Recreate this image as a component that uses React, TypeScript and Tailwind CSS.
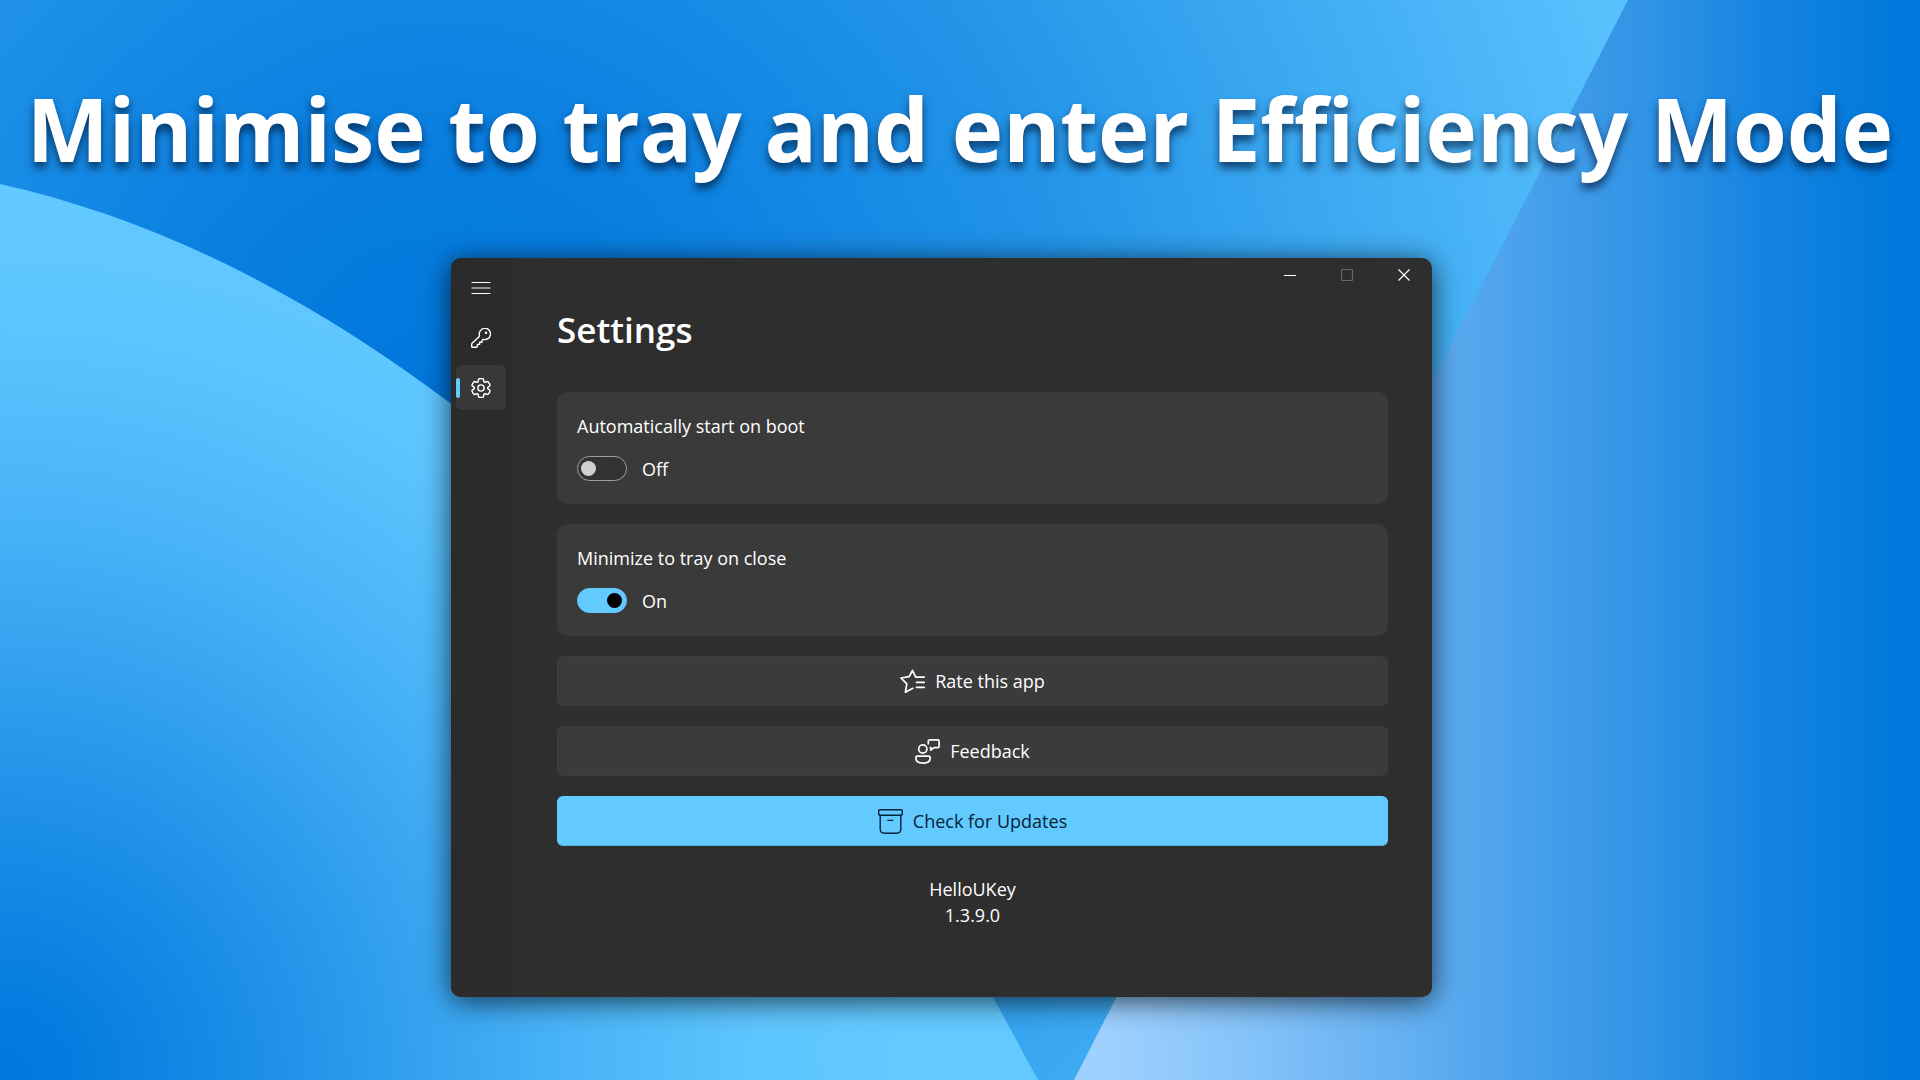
import { useState } from "react";
import type { ReactNode } from "react";

function Wallpaper() {
  return (
    <svg
      aria-hidden="true"
      className="absolute inset-0 h-full w-full"
      viewBox="0 0 1920 1080"
      preserveAspectRatio="none"
    >
      <defs>
        <radialGradient id="sky" gradientUnits="userSpaceOnUse" cx="440" cy="400" r="1240">
          <stop offset="0" stopColor="#0076dc" />
          <stop offset="0.2" stopColor="#097ee0" />
          <stop offset="0.5" stopColor="#2193e8" />
          <stop offset="0.8" stopColor="#43aff4" />
          <stop offset="1" stopColor="#59c2fe" />
        </radialGradient>
        <radialGradient id="wave" gradientUnits="userSpaceOnUse" cx="0" cy="1080" r="900">
          <stop offset="0" stopColor="#0077dc" />
          <stop offset="0.08" stopColor="#047bdf" />
          <stop offset="0.3" stopColor="#1e90e8" />
          <stop offset="0.5" stopColor="#38a5f1" />
          <stop offset="0.63" stopColor="#48b3f7" />
          <stop offset="0.84" stopColor="#5dc5fe" />
          <stop offset="1" stopColor="#62caff" />
        </radialGradient>
        <linearGradient id="beam" gradientUnits="userSpaceOnUse" x1="1100" y1="0" x2="1900" y2="0">
          <stop offset="0" stopColor="#9fd1ff" />
          <stop offset="0.19" stopColor="#84c2f9" />
          <stop offset="0.43" stopColor="#5cabf0" />
          <stop offset="0.55" stopColor="#459fea" />
          <stop offset="0.69" stopColor="#2f93e6" />
          <stop offset="0.83" stopColor="#1584e1" />
          <stop offset="1" stopColor="#0078dc" />
        </linearGradient>
      </defs>
      <rect width="1920" height="1080" fill="url(#sky)" />
      <path d="M0 184C170 222 320 305 450 403C690 585 880 780 993 997L1038 1080H0Z" fill="url(#wave)" />
      <path d="M1628 0H1920V1080H1074Z" fill="url(#beam)" />
    </svg>
  );
}

function MenuIcon() {
  return (
    <svg aria-hidden="true" className="size-5" viewBox="0 0 20 20" fill="none" stroke="currentColor" strokeWidth="1.2" strokeLinecap="round">
      <path d="M1 4.5H19M1 10H19M1 15.5H19" />
    </svg>
  );
}

function KeyIcon() {
  return (
    <svg aria-hidden="true" className="size-5" viewBox="0 0 20 20" fill="none" stroke="currentColor" strokeWidth="1.4" strokeLinejoin="round">
      <path d="M8.5 7.5A5.6 5.6 0 1 1 12.2 11.3L11 12.6V14.2H8.6V16.4H6.4V18.2L5.4 19.3H1.6Q.7 19.3 .7 18.4V16.2Q.7 15.6 1.1 15.2L8.3 8.4Z" />
      <circle cx="15" cy="4.8" r="1.3" fill="currentColor" stroke="none" />
    </svg>
  );
}

function GearIcon() {
  return (
    <svg aria-hidden="true" className="size-5" viewBox="1 1 18 18" fill="none" stroke="currentColor" strokeWidth="1.3" strokeLinejoin="round">
      <path d="M1.91 7.38A8.5 8.5 0 0 1 3.7 4.3a.5.5 0 0 1 .54-.13l1.92.68a1 1 0 0 0 1.32-.76l.36-2a.5.5 0 0 1 .4-.4 8.53 8.53 0 0 1 3.55 0c.2.04.35.2.38.4l.37 2a1 1 0 0 0 1.32.76l1.92-.68a.5.5 0 0 1 .54.13 8.5 8.5 0 0 1 1.78 3.08c.06.2 0 .4-.15.54l-1.56 1.32a1 1 0 0 0 0 1.52l1.56 1.32a.5.5 0 0 1 .15.54 8.5 8.5 0 0 1-1.78 3.08.5.5 0 0 1-.54.13l-1.92-.68a1 1 0 0 0-1.32.76l-.37 2a.5.5 0 0 1-.38.4 8.53 8.53 0 0 1-3.56 0 .5.5 0 0 1-.39-.4l-.36-2a1 1 0 0 0-1.32-.76l-1.92.68a.5.5 0 0 1-.54-.13 8.5 8.5 0 0 1-1.78-3.08.5.5 0 0 1 .15-.54l1.56-1.32a1 1 0 0 0 0-1.52L2.06 7.92a.5.5 0 0 1-.15-.54Z" />
      <circle cx="10" cy="10" r="2.8" />
    </svg>
  );
}

function StarListIcon() {
  return (
    <svg aria-hidden="true" className="size-[25px]" viewBox="0 0 25 25" fill="none" stroke="currentColor" strokeWidth="1.7" strokeLinejoin="round" strokeLinecap="round">
      <path d="M24.2 8.1H15.7L12.5 1.3L9.2 7.7L1 9L6.8 14.8L5.4 23.2L12.8 19.3" />
      <path d="M16.5 13.3H24.2M16.5 18.3H24.2" />
    </svg>
  );
}

function FeedbackIcon() {
  return (
    <svg aria-hidden="true" className="size-[25px]" viewBox="0 0 25 25" fill="none" stroke="currentColor" strokeWidth="1.7" strokeLinejoin="round">
      <circle cx="7.8" cy="10" r="4.1" />
      <path d="M2.5 17.2H13.5Q15.2 17.2 15.2 18.9C15.2 22.6 12 24.1 8 24.1S.9 22.6 .9 18.9Q.9 17.2 2.5 17.2Z" />
      <path d="M13.3 5.6V2.3Q13.3 .9 14.8 .9H22.6Q24.1 .9 24.1 2.3V7.2Q24.1 8.7 22.6 8.7H19L15.8 11.2V8.7H14.6" />
    </svg>
  );
}

function ArchiveIcon() {
  return (
    <svg aria-hidden="true" className="size-[25px]" viewBox="0 0 25 25" fill="none" stroke="currentColor" strokeWidth="1.4" strokeLinejoin="round" strokeLinecap="round">
      <rect x=".7" y=".7" width="23.6" height="5.6" rx="1.2" />
      <path d="M2.2 6.3V20Q2.2 24.2 6.5 24.2H18.5Q22.8 24.2 22.8 20V6.3M9.8 11.4H14.8" />
    </svg>
  );
}

function NavButton({ label, active = false, children }: { label: string; active?: boolean; children: ReactNode }) {
  return (
    <button
      type="button"
      aria-label={label}
      aria-current={active ? "page" : undefined}
      className={
        active
          ? "relative flex h-[45px] w-[50px] items-center justify-center rounded-md bg-[#383838]"
          : "flex h-[45px] w-[50px] items-center justify-center rounded-md hover:bg-[#383838]"
      }
    >
      {active && <span className="absolute left-0 h-5 w-1 rounded-full bg-[#62caff]" />}
      {children}
    </button>
  );
}

function CaptionButton({ label, disabled = false, path }: { label: string; disabled?: boolean; path: string }) {
  return (
    <button
      type="button"
      aria-label={label}
      disabled={disabled}
      className="flex h-[34px] w-[57px] items-center justify-center text-white disabled:text-[#686868]"
    >
      <svg aria-hidden="true" className="size-3" viewBox="0 0 12 12" fill="none" stroke="currentColor" strokeWidth="1.2">
        <path d={path} />
      </svg>
    </button>
  );
}

function SettingToggle({ id, label, initial }: { id: string; label: string; initial: boolean }) {
  const [on, setOn] = useState(initial);
  return (
    <div className="rounded-[10px] bg-[#3a3a3a] px-5 pt-[22px] pb-[23px]">
      <label htmlFor={id} className="block leading-6">
        {label}
      </label>
      <div className="mt-[18px] flex h-[25px] items-center gap-[15px]">
        <input
          id={id}
          type="checkbox"
          role="switch"
          checked={on}
          onChange={(event) => setOn(event.target.checked)}
          className="flex h-[25px] w-[50px] appearance-none items-center rounded-full border border-[#a0a0a0] bg-[#333333] px-[3px] before:block before:size-[15px] before:rounded-full before:bg-[#d0d0d0] checked:justify-end checked:border-[#62caff] checked:bg-[#62caff] checked:px-1 checked:before:bg-black"
        />
        <span className="leading-6">{on ? "On" : "Off"}</span>
      </div>
    </div>
  );
}

function ActionButton({ icon, accent = false, children }: { icon: ReactNode; accent?: boolean; children: ReactNode }) {
  return (
    <button
      type="button"
      className={
        accent
          ? "flex h-[50px] items-center justify-center gap-2.5 rounded-md border border-[#62caff] border-b-[#55afdd] bg-[#62caff] text-[#062238]"
          : "flex h-[50px] items-center justify-center gap-2.5 rounded-md border border-[#3e3e3e] bg-[#3b3b3b]"
      }
    >
      {icon}
      <span>{children}</span>
    </button>
  );
}

export default function App() {
  return (
    <div className="relative flex min-h-screen flex-col items-center overflow-hidden bg-[#0078dc] font-['Open_Sans','Noto_Sans',sans-serif] text-white">
      <Wallpaper />
      <h1 className="relative mt-16 text-center text-[87px] leading-[128px] font-bold whitespace-nowrap [text-shadow:0_6px_8px_rgba(0,20,50,0.7)]">
        Minimise to tray and enter Efficiency Mode
      </h1>
      <main className="relative mt-[66px] mr-[37px] mb-20 flex w-full max-w-[981px] overflow-hidden rounded-[10px] bg-[#2e2e2e] text-lg shadow-[0_4px_28px_rgba(0,0,0,0.7)]">
        <nav aria-label="Main" className="flex w-[62px] shrink-0 flex-col gap-[5px] bg-[#2b2b2b] pt-[7px] pl-[5px]">
          <NavButton label="Open navigation">
            <MenuIcon />
          </NavButton>
          <NavButton label="Keys">
            <KeyIcon />
          </NavButton>
          <NavButton label="Settings" active>
            <GearIcon />
          </NavButton>
        </nav>
        <div className="flex min-w-0 flex-1 flex-col">
          <header className="flex justify-end">
            <CaptionButton label="Minimize" path="M0 6.5H12" />
            <CaptionButton label="Maximize" disabled path="M1.5 .5H10.5Q11.5 .5 11.5 1.5V10.5Q11.5 11.5 10.5 11.5H1.5Q.5 11.5 .5 10.5V1.5Q.5 .5 1.5 .5Z" />
            <CaptionButton label="Close" path="M.5 .5L11.5 11.5M11.5 .5L.5 11.5" />
          </header>
          <div className="flex flex-col gap-5 pr-11 pb-[69px] pl-11">
            <h2 className="mt-4 mb-5 text-[35px] leading-[44px] font-semibold">Settings</h2>
            <SettingToggle id="start-on-boot" label="Automatically start on boot" initial={false} />
            <SettingToggle id="minimize-to-tray" label="Minimize to tray on close" initial={true} />
            <ActionButton icon={<StarListIcon />}>Rate this app</ActionButton>
            <ActionButton icon={<FeedbackIcon />}>Feedback</ActionButton>
            <ActionButton icon={<ArchiveIcon />} accent>
              Check for Updates
            </ActionButton>
            <footer className="mt-2.5 text-center leading-[26px]">
              <p>HelloUKey</p>
              <p>1.3.9.0</p>
            </footer>
          </div>
        </div>
      </main>
    </div>
  );
}
